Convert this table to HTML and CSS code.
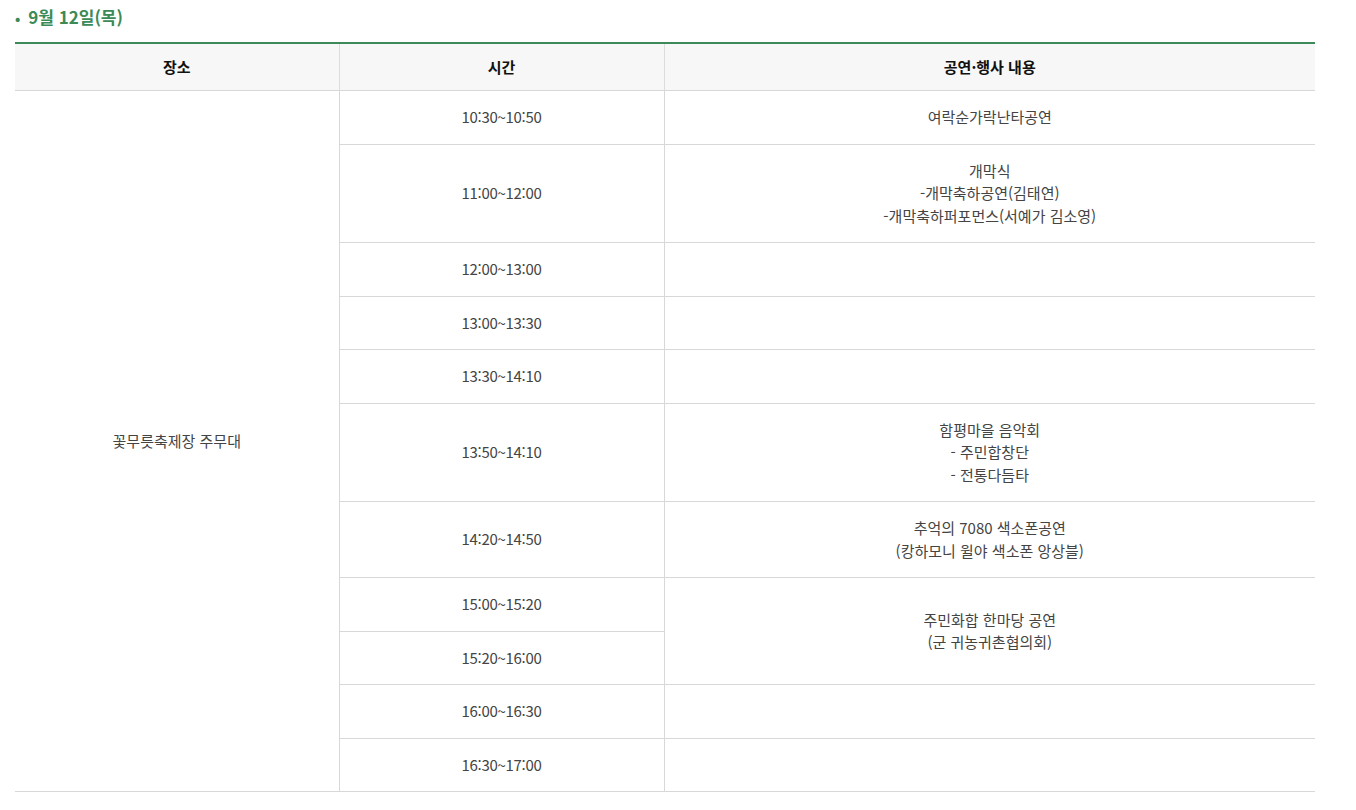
FILE: index.html
```html
<!DOCTYPE html>
<html lang="ko">
<head>
<meta charset="utf-8">
<title>9월 12일 일정</title>
<link rel="stylesheet" href="styles.css">
</head>
<body>
<div class="wrap">
  <h3 class="day-title"><span class="dot">•</span>9월 12일(목)</h3>
  <table class="schedule">
    <colgroup>
      <col class="c-place">
      <col class="c-time">
      <col class="c-desc">
    </colgroup>
    <thead>
      <tr><th>장소</th><th>시간</th><th>공연·행사 내용</th></tr>
    </thead>
    <tbody>
      <tr>
        <td rowspan="11">꽃무릇축제장 주무대</td>
        <td class="time">10:30~10:50</td>
        <td>여락순가락난타공연</td>
      </tr>
      <tr>
        <td class="time">11:00~12:00</td>
        <td>개막식<br>-개막축하공연(김태연)<br>-개막축하퍼포먼스(서예가 김소영)</td>
      </tr>
      <tr><td class="time">12:00~13:00</td><td></td></tr>
      <tr><td class="time">13:00~13:30</td><td></td></tr>
      <tr><td class="time">13:30~14:10</td><td></td></tr>
      <tr>
        <td class="time">13:50~14:10</td>
        <td>함평마을 음악회<br>- 주민합창단<br>- 전통다듬타</td>
      </tr>
      <tr>
        <td class="time">14:20~14:50</td>
        <td>추억의 7080 색소폰공연<br>(캉하모니 윌야 색소폰 앙상블)</td>
      </tr>
      <tr>
        <td class="time">15:00~15:20</td>
        <td rowspan="2">주민화합 한마당 공연<br>(군 귀농귀촌협의회)</td>
      </tr>
      <tr><td class="time">15:20~16:00</td></tr>
      <tr><td class="time">16:00~16:30</td><td></td></tr>
      <tr><td class="time">16:30~17:00</td><td></td></tr>
    </tbody>
  </table>
</div>
</body>
</html>
```
FILE: styles.css
```css
html, body {
  margin: 0;
  padding: 0;
  background: #fff;
}
body {
  font-family: "Noto Sans CJK KR", "Noto Sans", sans-serif;
  color: #444;
}
.wrap {
  padding: 5px 41px 0 15px;
}
.day-title {
  margin: 0 0 12px 0;
  font-size: 17px;
  line-height: 24px;
  font-weight: 700;
  color: #3b8a58;
}
.day-title .dot {
  display: inline-block;
  margin: 0 8px 0 0;
  font-size: 14px;
}
.schedule {
  width: 1300px;
  border-collapse: collapse;
  table-layout: fixed;
  border-top: 2px solid #3b8a58;
}
.c-place { width: 324px; }
.c-time { width: 325px; }
.c-desc { width: 651px; }
.schedule th {
  background: #f7f7f7;
  color: #111;
  font-size: 15px;
  font-weight: 700;
  line-height: 22px;
  height: 46px;
  padding: 0;
  border-bottom: 1px solid #d8d8d8;
  border-left: 1px solid #dcdcdc;
}
.schedule th:first-child { border-left: 0; }
.schedule td {
  font-size: 15px;
  line-height: 22.5px;
  padding: 15px 10px;
  text-align: center;
  border-bottom: 1px solid #d8d8d8;
  border-left: 1px solid #d8d8d8;
  color: #444;
  font-weight: 400;
}
.schedule tbody tr:first-child td:first-child { border-left: 0; }
.schedule td.time { letter-spacing: -0.3px; }
```
